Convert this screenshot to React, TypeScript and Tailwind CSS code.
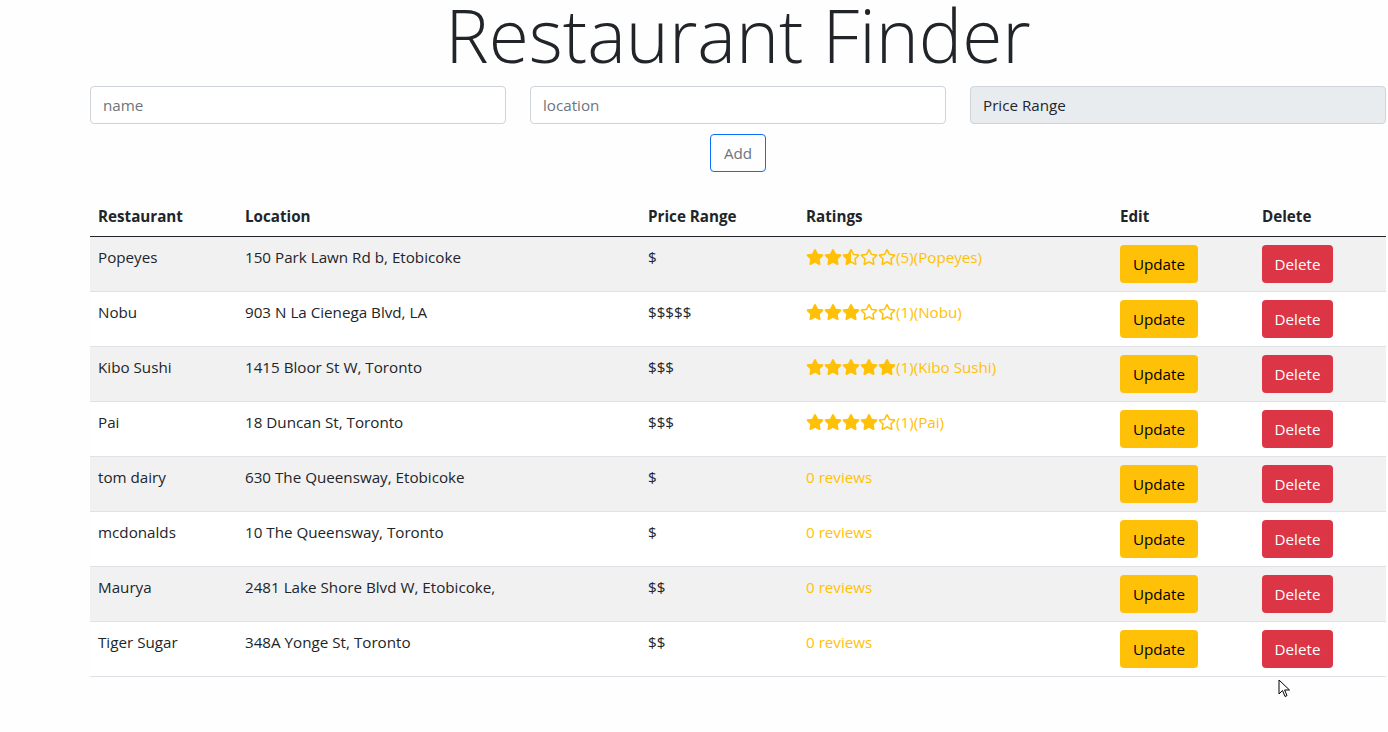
import React from "react";
import { FaStar, FaStarHalfAlt, FaRegStar } from "react-icons/fa";

type Restaurant = {
  name: string;
  location: string;
  price: number;
  rating?: number;
  reviews?: number;
};

const restaurants: Restaurant[] = [
  { name: "Popeyes", location: "150 Park Lawn Rd b, Etobicoke", price: 1, rating: 2.5, reviews: 5 },
  { name: "Nobu", location: "903 N La Cienega Blvd, LA", price: 5, rating: 3, reviews: 1 },
  { name: "Kibo Sushi", location: "1415 Bloor St W, Toronto", price: 3, rating: 5, reviews: 1 },
  { name: "Pai", location: "18 Duncan St, Toronto", price: 3, rating: 4, reviews: 1 },
  { name: "tom dairy", location: "630 The Queensway, Etobicoke", price: 1 },
  { name: "mcdonalds", location: "10 The Queensway, Toronto", price: 1 },
  { name: "Maurya", location: "2481 Lake Shore Blvd W, Etobicoke,", price: 2 },
  { name: "Tiger Sugar", location: "348A Yonge St, Toronto", price: 2 },
];

const StarRating: React.FC<{ rating: number }> = ({ rating }) => {
  const stars = [];
  for (let i = 1; i <= 5; i++) {
    if (i <= rating) {
      stars.push(<FaStar key={i} className="inline-block h-4 w-[18px]" />);
    } else if (i === Math.ceil(rating) && !Number.isInteger(rating)) {
      stars.push(<FaStarHalfAlt key={i} className="inline-block h-4 w-[18px]" />);
    } else {
      stars.push(<FaRegStar key={i} className="inline-block h-4 w-[18px]" />);
    }
  }
  return <span className="inline-flex items-center">{stars}</span>;
};

const App: React.FC = () => {
  return (
    <div
      className="relative flow-root min-h-[732px] bg-[#fefefe] text-[#212529] text-[15.2px]"
      style={{ fontFamily: '"Open Sans", "Noto Sans", sans-serif' }}
    >
      <div className="ml-[90px] w-[1296px]">
        {/* Title */}
        <h1 className="text-center text-[73px] leading-[70px] font-light mb-4">
          Restaurant Finder
        </h1>

        {/* Add form */}
        <div className="grid grid-cols-3 gap-6">
          <input
            placeholder="name"
            className="h-[38px] px-3 border border-[#ced4da] rounded bg-white placeholder:text-[#6c757d] outline-none"
          />
          <input
            placeholder="location"
            className="h-[38px] px-3 border border-[#ced4da] rounded bg-white placeholder:text-[#6c757d] outline-none"
          />
          <div className="h-[38px] px-3 flex items-center border border-[#ced4da] rounded bg-[#e9ecef]">
            Price Range
          </div>
        </div>
        <div className="flex justify-center mt-[10px]">
          <button className="h-[38px] w-[56px] border border-[#0d6efd] rounded text-[#6c757d]">
            Add
          </button>
        </div>

        {/* Table */}
        <table className="mt-6 w-full table-fixed border-collapse">
          <colgroup>
            <col className="w-[147px]" />
            <col className="w-[403px]" />
            <col className="w-[158px]" />
            <col className="w-[314px]" />
            <col className="w-[142px]" />
            <col className="w-[132px]" />
          </colgroup>
          <thead>
            <tr className="border-b border-[#212529] text-left">
              <th className="px-2 py-2 font-bold leading-6">Restaurant</th>
              <th className="px-2 py-2 font-bold leading-6">Location</th>
              <th className="px-2 py-2 font-bold leading-6">Price Range</th>
              <th className="px-2 py-2 font-bold leading-6">Ratings</th>
              <th className="px-2 py-2 font-bold leading-6">Edit</th>
              <th className="px-2 py-2 font-bold leading-6">Delete</th>
            </tr>
          </thead>
          <tbody>
            {restaurants.map((r, idx) => (
              <tr
                key={r.name}
                className={`border-b border-[#dee2e6] align-top ${idx % 2 === 0 ? "bg-[#f2f1f2]" : "bg-white"}`}
              >
                <td className="px-2 py-2 leading-6">{r.name}</td>
                <td className="px-2 py-2 leading-6">{r.location}</td>
                <td className="px-2 py-2 leading-6">{"$".repeat(r.price)}</td>
                <td className="px-2 py-2 leading-6 text-[#ffc107]">
                  {r.rating ? (
                    <span className="inline-flex items-center">
                      <StarRating rating={r.rating} />
                      <span>
                        ({r.reviews})({r.name})
                      </span>
                    </span>
                  ) : (
                    <span>0 reviews</span>
                  )}
                </td>
                <td className="px-2 py-2">
                  <button className="h-[38px] w-[78px] rounded bg-[#ffc107] text-black">Update</button>
                </td>
                <td className="px-2 py-2">
                  <button className="h-[38px] w-[71px] rounded bg-[#dc3545] text-white">Delete</button>
                </td>
              </tr>
            ))}
          </tbody>
        </table>
      </div>

      {/* mouse cursor */}
      <svg
        className="absolute left-[1278px] top-[679px]"
        width="13"
        height="20"
        viewBox="0 0 13 20"
      >
        <path
          d="M1 1 L1 15 L4.5 11.5 L7 17.5 L9 16.6 L6.6 11 L11.5 11 Z"
          fill="white"
          stroke="black"
          strokeWidth="1"
          strokeLinejoin="round"
        />
      </svg>
    </div>
  );
};

export default App;
